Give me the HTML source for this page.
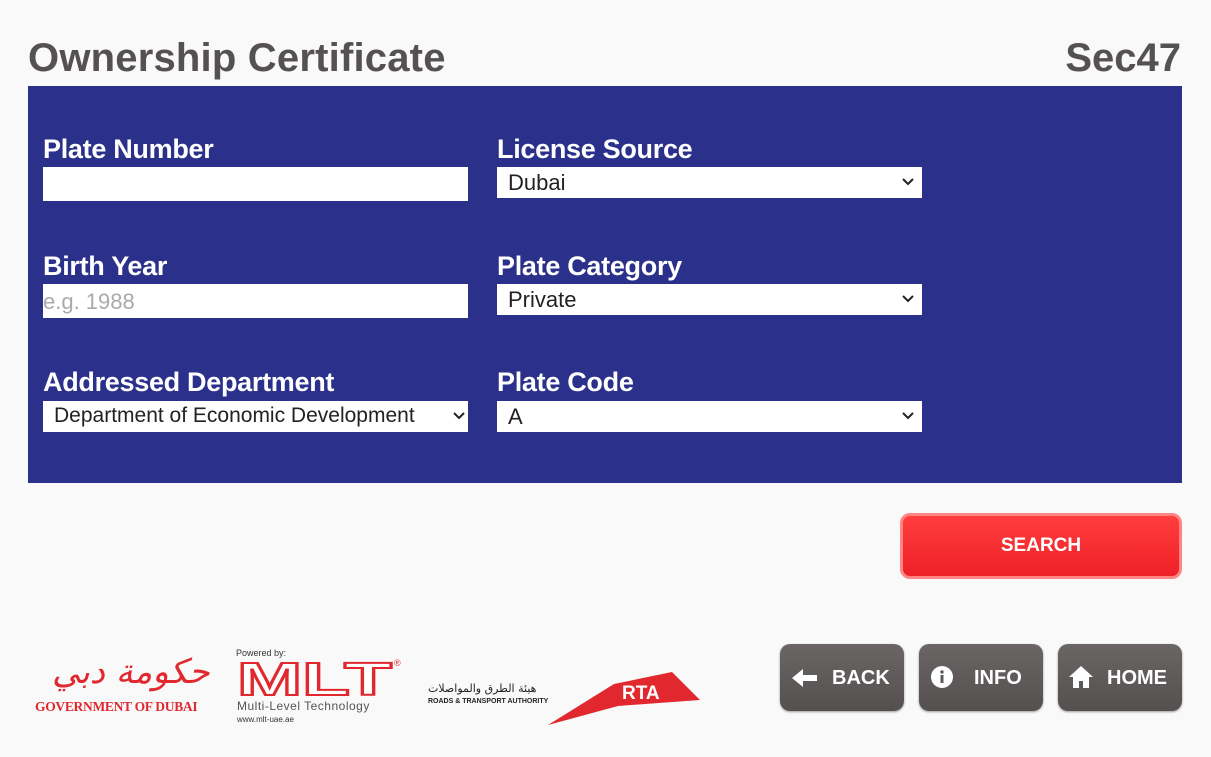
<!DOCTYPE html>
<html><head><style>
*{margin:0;padding:0;box-sizing:border-box}
body{width:1211px;height:757px;background:#f9f9f9;font-family:"Liberation Sans",Arial,sans-serif;position:relative;overflow:hidden}
.a{position:absolute}
h1{position:absolute;left:28px;top:36px;font-size:40px;font-weight:bold;color:#555152;letter-spacing:0.2px}
.sec{position:absolute;right:30px;top:36px;font-size:40px;font-weight:bold;color:#555152}
.panel{position:absolute;left:28px;top:86px;width:1154px;height:397px;background:#2b318b}
.lbl{position:absolute;color:#fff;font-weight:bold;font-size:27px;letter-spacing:-0.3px}
.in{position:absolute;background:#fff;height:34px;width:425px;font-size:22px;color:#222;padding:5px 0 0 0}
.sel{height:31px;padding:3px 0 0 11px}
.sel svg{position:absolute;right:8px;top:11px}
.btn{position:absolute;border-radius:10px;color:#fff;font-weight:bold;font-size:20px;display:flex;align-items:center}
.dk{background:linear-gradient(#6a6666,#555050);top:644px;height:67px;width:124px;box-shadow:0 1px 2px #999}
</style></head><body>
<h1>Ownership Certificate</h1>
<div class="sec">Sec47</div>
<div class="panel"></div>
<div class="lbl" style="left:43px;top:134px">Plate Number</div>
<div class="in" style="left:43px;top:167px"></div>
<div class="lbl" style="left:497px;top:134px">License Source</div>
<div class="in sel" style="left:497px;top:167px">Dubai<svg width="12" height="8"><path d="M1 1l5 5 5-5" stroke="#222" stroke-width="2" fill="none"/></svg></div>
<div class="lbl" style="left:43px;top:251px">Birth Year</div>
<div class="in" style="left:43px;top:284px;color:#aaa;padding-left:0">e.g. 1988</div>
<div class="lbl" style="left:497px;top:251px">Plate Category</div>
<div class="in sel" style="left:497px;top:284px">Private<svg width="12" height="8"><path d="M1 1l5 5 5-5" stroke="#222" stroke-width="2" fill="none"/></svg></div>
<div class="lbl" style="left:43px;top:367px">Addressed Department</div>
<div class="in sel" style="left:43px;top:401px;font-size:21px;white-space:nowrap;overflow:hidden">Department of Economic Development<svg width="12" height="8" style="right:3px"><path d="M1 1l5 5 5-5" stroke="#222" stroke-width="2" fill="none"/></svg></div>
<div class="lbl" style="left:497px;top:367px">Plate Code</div>
<div class="in sel" style="left:497px;top:401px">A<svg width="12" height="8"><path d="M1 1l5 5 5-5" stroke="#222" stroke-width="2" fill="none"/></svg></div>

<div class="btn" style="left:900px;top:513px;width:282px;height:66px;background:linear-gradient(#ff3d3d,#ee2028);border:3px solid #ff8585;justify-content:center;font-size:19px">SEARCH</div>

<div class="btn dk" style="left:780px"><svg class="a" style="left:12px;top:24px" width="26" height="20"><path d="M0 10L11 1v6h14v6H11v6z" fill="#fff"/></svg><span class="a" style="left:52px;top:23px">BACK</span></div>
<div class="btn dk" style="left:919px"><svg class="a" style="left:12px;top:22px" width="22" height="22"><circle cx="11" cy="11" r="11" fill="#fff"/><rect x="9.5" y="9" width="3" height="8" fill="#5f5a5a"/><circle cx="11" cy="6" r="1.7" fill="#5f5a5a"/></svg><span class="a" style="left:55px;top:23px">INFO</span></div>
<div class="btn dk" style="left:1058px"><svg class="a" style="left:10px;top:21px" width="26" height="24"><path d="M13 1L1 12h4v11h6v-7h4v7h6V12h4z" fill="#fff"/></svg><span class="a" style="left:49px;top:23px">HOME</span></div>

<div class="a" style="left:52px;top:652px;color:#e0282e;font-family:'DejaVu Serif',serif;font-size:34px;font-style:italic;letter-spacing:-2px">حكومة دبي</div>
<div class="a" style="left:35px;top:699px;color:#e0282e;font-family:'Liberation Serif',serif;font-size:13.5px;font-weight:bold;letter-spacing:-0.3px">GOVERNMENT OF DUBAI</div>

<div class="a" style="left:236px;top:648px;font-size:9px;color:#333">Powered by:</div>
<div class="a" style="left:237px;top:658px;font-size:46px;font-weight:bold;color:#fff;-webkit-text-stroke:2px #e0282e;line-height:42px;transform:scaleX(1.7);transform-origin:left top">MLT</div>
<div class="a" style="left:394px;top:658px;font-size:9px;color:#e0282e">®</div>
<div class="a" style="left:237px;top:699px;font-size:12px;color:#555;letter-spacing:0.5px">Multi-Level Technology</div>
<div class="a" style="left:237px;top:715px;font-size:8px;color:#333">www.mlt-uae.ae</div>

<div class="a" style="left:428px;top:682px;font-size:11px;color:#222;font-family:'DejaVu Sans',sans-serif">هيئة الطرق والمواصلات</div>
<div class="a" style="left:428px;top:698px;font-size:7px;font-weight:bold;color:#222">ROADS &amp; TRANSPORT AUTHORITY</div>
<svg class="a" style="left:548px;top:670px" width="155" height="56"><path d="M0 55L66 14 124 2 152 30 70 36z" fill="#e0282e"/></svg>
<div class="a" style="left:622px;top:683px;font-size:19px;font-weight:bold;color:#fff">RTA</div>
</body></html>
